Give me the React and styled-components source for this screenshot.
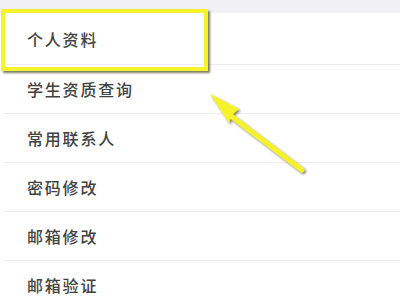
import styled, { createGlobalStyle } from "styled-components";

const GlobalStyle = createGlobalStyle`
  html, body {
    margin: 0;
    padding: 0;
    background: #ffffff;
  }
  body {
    font-family: "Noto Sans CJK SC", "Noto Sans", sans-serif;
  }
`;

const items = [
  "个人资料",
  "学生资质查询",
  "常用联系人",
  "密码修改",
  "邮箱修改",
  "邮箱验证",
];

const App = () => {
  return (
    <>
      <GlobalStyle />
      <Screen>
        <TopBand />
        <List>
          {items.map((label, i) => (
            <Row key={label} $first={i === 0}>
              <Label>{label}</Label>
            </Row>
          ))}
        </List>
        <Highlight />
        <Arrow viewBox="0 0 400 300">
          <defs>
            <filter id="shade" x="-20%" y="-20%" width="140%" height="140%">
              <feDropShadow dx="1.5" dy="1.5" stdDeviation="1" floodColor="#4a4a20" floodOpacity="0.75" />
            </filter>
          </defs>
          <g filter="url(#shade)" fill="#f6f22c">
            <line x1="231" y1="116" x2="302" y2="170" stroke="#f6f22c" strokeWidth="5" strokeLinecap="round" />
            <polygon points="210,94 239,109 232,115 229,123" />
          </g>
        </Arrow>
      </Screen>
    </>
  );
};

const Screen = styled.div`
  position: relative;
  width: 400px;
  height: 300px;
  overflow: hidden;
  background: #ffffff;
`;

const TopBand = styled.div`
  height: 13px;
  background: #f1f1f5;
`;

const List = styled.div`
  display: flex;
  flex-direction: column;
`;

const Row = styled.div`
  height: ${(p) => (p.$first ? "51px" : "48px")};
  margin-left: 4px;
  border-bottom: 1px solid #ececec;
  display: flex;
  align-items: center;
  padding-left: 23px;
`;

const Label = styled.span`
  font-size: 16px;
  letter-spacing: 1.8px;
  color: #424242;
  font-weight: 500;
`;

const Highlight = styled.div`
  position: absolute;
  left: 1px;
  top: 9px;
  width: 199px;
  height: 54px;
  border: 4px solid #f6f22c;
  box-shadow: 2px 2px 2px rgba(70, 70, 30, 0.7);
`;

const Arrow = styled.svg`
  position: absolute;
  left: 0;
  top: 0;
  width: 400px;
  height: 300px;
  pointer-events: none;
`;

export default App;
